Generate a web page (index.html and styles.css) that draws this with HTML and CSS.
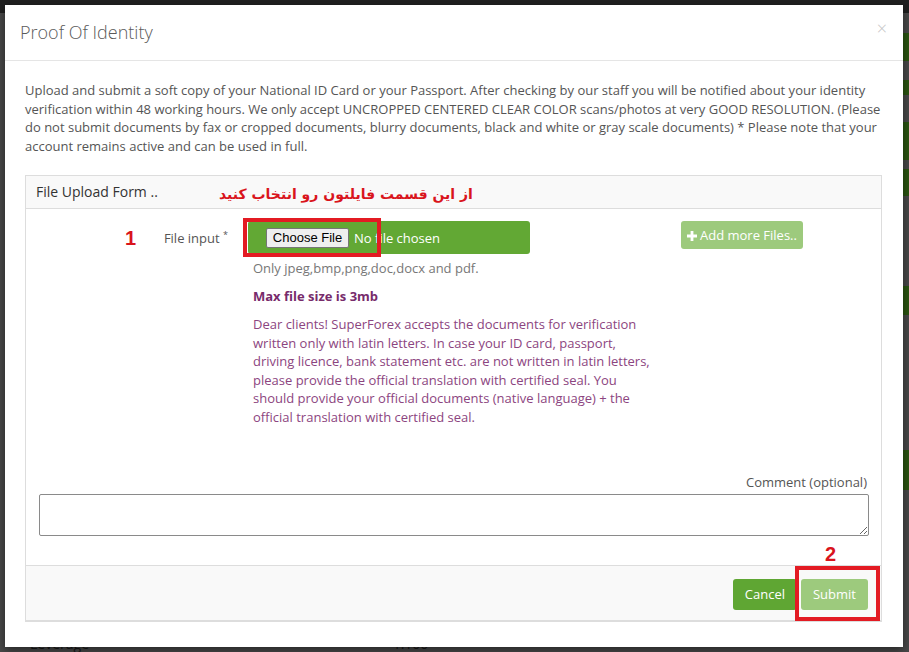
FILE: index.html
```html
<!DOCTYPE html>
<html lang="en">
<head>
    <meta charset="UTF-8">
    <meta name="viewport" content="width=device-width, initial-scale=1.0">
    <title>Proof Of Identity</title>
    <link rel="stylesheet" href="styles.css">
</head>
<body>
    <!-- page behind the modal -->
    <div class="page">
        <div class="navbar"></div>
        <div class="side-strip">
            <span class="strip g1"></span>
            <span class="strip g2"></span>
            <span class="strip g3"></span>
            <span class="strip g4"></span>
            <span class="strip g5"></span>
            <span class="strip g6"></span>
        </div>
        <div class="page-foot">
            <span>Leverage</span>
            <span class="foot-val">1:100</span>
        </div>
    </div>
    <div class="backdrop"></div>

    <div class="modal">
        <div class="modal-header">
            <h4 class="modal-title">Proof Of Identity</h4>
            <span class="close">&times;</span>
        </div>

        <div class="modal-body">
            <p class="intro">Upload and submit a soft copy of your National ID Card or your Passport. After checking by our staff you will be notified about your identity verification within 48 working hours. We only accept UNCROPPED CENTERED CLEAR COLOR scans/photos at very GOOD RESOLUTION. (Please do not submit documents by fax or cropped documents, blurry documents, black and white or gray scale documents) * Please note that your account remains active and can be used in full.</p>

            <div class="panel">
                <div class="panel-heading">File Upload Form ..</div>

                <div class="panel-body">
                    <div class="form-row">
                        <label class="control-label">File input <sup>*</sup></label>
                        <div class="input-col">
                            <div class="file-box">
                                <span class="choose-btn">Choose File</span>
                                <span class="no-file">No file chosen</span>
                            </div>
                            <p class="help">Only jpeg,bmp,png,doc,docx and pdf.</p>
                            <p class="max-size">Max file size is 3mb</p>
                            <p class="notice">Dear clients! SuperForex accepts the documents for verification written only with latin letters. In case your ID card, passport, driving licence, bank statement etc. are not written in latin letters, please provide the official translation with certified seal. You should provide your official documents (native language) + the official translation with certified seal.</p>
                        </div>
                        <div class="btn-col">
                            <span class="btn btn-light add-more"><svg class="plus" viewBox="0 0 10 10" width="10" height="10"><path d="M3.6 0h2.8v3.6H10v2.8H6.4V10H3.6V6.4H0V3.6h3.6z" fill="#fff"/></svg>Add more Files..</span>
                        </div>
                    </div>

                    <div class="comment-group">
                        <label class="comment-label">Comment (optional)</label>
                        <textarea class="comment" rows="2"></textarea>
                    </div>
                </div>

                <div class="panel-footer">
                    <span class="btn btn-green">Cancel</span>
                    <span class="btn btn-light">Submit</span>
                </div>
            </div>
        </div>

        <!-- annotations drawn on the screenshot -->
        <div class="note-text">از این قسمت فایلتون رو انتخاب کنید</div>
        <div class="note-num num-1">1</div>
        <div class="note-num num-2">2</div>
        <div class="note-box box-1"></div>
        <div class="note-box box-2"></div>
    </div>
</body>
</html>
```

FILE: styles.css
```css
* {
    box-sizing: border-box;
}

body {
    margin: 0;
    font-family: "Open Sans", "DejaVu Sans", sans-serif;
    background-color: #4d4d4d;
    overflow: hidden;
    width: 909px;
    height: 652px;
}

.page {
    height: 652px;
}

.navbar {
    height: 13px;
    background-color: #222;
}

.side-strip {
    position: absolute;
    top: 0;
    right: 0;
    width: 10px;
    height: 652px;
}

.strip {
    position: absolute;
    left: 0;
    width: 10px;
    background-color: #2e5a12;
}

.g1 { top: 33px; height: 28px; }
.g2 { top: 80px; height: 15px; }
.g3 { top: 122px; height: 38px; }
.g4 { top: 169px; height: 27px; }
.g5 { top: 286px; height: 29px; }
.g6 { top: 450px; height: 40px; }

.page-foot {
    position: absolute;
    top: 634px;
    left: 30px;
    font-size: 14px;
    color: #1a1a1a;
}

.foot-val {
    margin-left: 300px;
}

.backdrop {
    position: absolute;
    inset: 0;
    background-color: rgba(0, 0, 0, 0.05);
}

.modal {
    position: absolute;
    top: 5px;
    left: 5px;
    width: 898px;
    height: 642px;
    background-color: #fff;
    box-shadow: 0 3px 9px rgba(0, 0, 0, 0.5);
}

.modal-header {
    position: relative;
    padding: 15px;
    border-bottom: 1px solid #e5e5e5;
    height: 56px;
}

.modal-title {
    margin: 0;
    font-size: 18px;
    font-weight: 300;
    line-height: 25px;
    color: #5a5a5a;
}

.close {
    position: absolute;
    top: 11px;
    right: 16px;
    font-size: 18px;
    font-weight: 300;
    color: #c4c4c4;
}

.modal-body {
    padding: 20px 21px 20px 20px;
}

.intro {
    margin: 0 0 20px;
    font-size: 13px;
    line-height: 18.5px;
    color: #555;
}

.panel {
    border: 1px solid #ddd;
    border-bottom-width: 2px;
}

.panel-heading {
    height: 33px;
    padding: 6px 10px;
    font-size: 14px;
    line-height: 20px;
    color: #333;
    background-color: #f9f9f9;
    border-bottom: 1px solid #ddd;
}

.panel-body {
    padding: 12px 13px 29px 13px;
}

.form-row {
    display: flex;
    gap: 20px;
}

.control-label {
    width: 189px;
    padding-top: 7px;
    text-align: right;
    font-size: 13px;
    color: #555;
}

.control-label sup {
    font-size: 9px;
}

.input-col {
    width: 413px;
}

.file-box {
    display: flex;
    align-items: center;
    width: 282px;
    height: 33px;
    padding-left: 18px;
    background-color: #62a834;
    border-radius: 3px;
}

.choose-btn {
    width: 83px;
    height: 20px;
    font-family: "Liberation Sans", Arial, sans-serif;
    font-size: 13px;
    line-height: 18px;
    text-align: center;
    color: #000;
    background-color: #efefef;
    border: 1px solid #767676;
    border-radius: 2px;
}

.no-file {
    margin-left: 5px;
    font-size: 13px;
    color: #fff;
}

.help {
    margin: 5px 0 0 5px;
    font-size: 13px;
    line-height: 18px;
    color: #777;
}

.max-size {
    margin: 10px 0 0 5px;
    font-size: 13px;
    font-weight: 700;
    line-height: 18px;
    color: #772b6b;
}

.notice {
    max-width: 400px;
    margin: 10px 0 0 5px;
    font-size: 13px;
    line-height: 18.5px;
    color: #8c4580;
}

.btn {
    display: inline-block;
    height: 31px;
    padding: 0 12px;
    font-size: 13px;
    line-height: 31px;
    color: #fff;
    border-radius: 3px;
}

.btn-green {
    background-color: #5fa633;
}

.btn-light {
    background-color: #9dca7d;
}

.add-more {
    height: 28px;
    padding: 0 6px;
    line-height: 28px;
}

.plus {
    margin-right: 3px;
    vertical-align: -1px;
}

.comment-group {
    margin-top: 47px;
    display: flex;
    flex-direction: column;
}

.comment-label {
    align-self: flex-end;
    margin-right: 1px;
    font-size: 13px;
    line-height: 18px;
    color: #555;
}

.comment {
    display: block;
    width: 830px;
    height: 42px;
    margin-top: 3px;
    border: 1px solid #8a8a8a;
    border-radius: 2px;
    resize: vertical;
}

.panel-footer {
    display: flex;
    justify-content: flex-end;
    gap: 4px;
    height: 55px;
    padding: 13px 13px 0;
    background-color: #f9f9f9;
    border-top: 1px solid #ddd;
}

.note-text {
    position: absolute;
    top: 181px;
    left: 214px;
    white-space: nowrap;
    direction: rtl;
    font-family: "DejaVu Sans", sans-serif;
    font-size: 14px;
    font-weight: 700;
    color: #d9141c;
}

.note-num {
    position: absolute;
    font-family: "Liberation Sans", Arial, sans-serif;
    font-size: 20px;
    font-weight: 700;
    color: #d9141c;
}

.num-1 {
    top: 222px;
    left: 120px;
}

.num-2 {
    top: 538px;
    left: 820px;
}

.note-box {
    position: absolute;
    border: 4px solid #e31b23;
}

.box-1 {
    top: 213px;
    left: 238px;
    width: 138px;
    height: 39px;
}

.box-2 {
    top: 561px;
    left: 790px;
    width: 85px;
    height: 55px;
}
```
